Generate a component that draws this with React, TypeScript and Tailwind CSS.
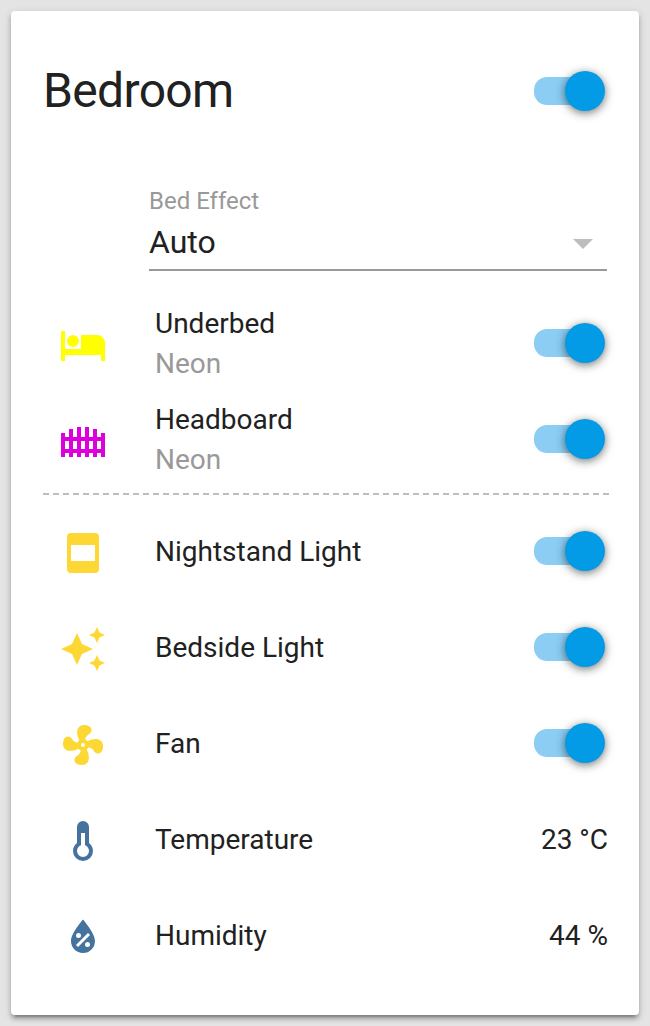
import React from "react";

const paths = {
  bed: "M19,7H11V14H3V5H1V20H3V17H21V20H23V11A4,4 0 0,0 19,7M7,13A3,3 0 0,0 10,10A3,3 0 0,0 7,7A3,3 0 0,0 4,10A3,3 0 0,0 7,13Z",
  fence:
    "M1,8H3V10H5V6H7V10H9V5H11V10H13V5H15V10H17V6H19V10H21V8H23V20H21V18H19V20H17V18H15V20H13V18H11V20H9V18H7V20H5V18H3V20H1ZM3,12V16H5V12ZM7,12V16H9V12ZM11,12V16H13V12ZM15,12V16H17V12ZM19,12V16H21V12Z",
  lamp: "M6,2H18A2,2 0 0,1 20,4V20A2,2 0 0,1 18,22H6A2,2 0 0,1 4,20V4A2,2 0 0,1 6,2M6,8V16H18V8Z",
  sparkle:
    "M19,1L17.74,3.75L15,5L17.74,6.26L19,9L20.25,6.26L23,5L20.25,3.75M9,4L6.5,9.5L1,12L6.5,14.5L9,20L11.5,14.5L17,12L11.5,9.5M19,15L17.74,17.74L15,19L17.74,20.25L19,23L20.25,20.25L23,19L20.25,17.74",
  fan: "M12,11A1,1 0 0,0 11,12A1,1 0 0,0 12,13A1,1 0 0,0 13,12A1,1 0 0,0 12,11M12.5,2C17,2 17.11,5.57 14.75,6.75C13.76,7.24 13.32,8.29 13.13,9.22C13.61,9.42 14.03,9.73 14.35,10.13C18.05,8.13 22.03,8.92 22.03,12.5C22.03,17 18.46,17.1 17.28,14.73C16.78,13.74 15.72,13.3 14.79,13.11C14.59,13.59 14.28,14 13.88,14.34C15.87,18.03 15.08,22 11.5,22C7,22 6.91,18.42 9.27,17.24C10.25,16.75 10.69,15.71 10.89,14.79C10.4,14.59 9.97,14.27 9.65,13.87C5.96,15.85 2,15.07 2,11.5C2,7 5.56,6.89 6.74,9.26C7.24,10.25 8.29,10.68 9.22,10.87C9.41,10.39 9.73,9.97 10.14,9.65C8.15,5.96 8.94,2 12.5,2Z",
  thermometer:
    "M17,17A5,5 0 0,1 12,22A5,5 0 0,1 7,17C7,15.36 7.79,13.91 9,13V5A3,3 0 0,1 12,2A3,3 0 0,1 15,5V13C16.21,13.91 17,15.36 17,17M11,8V14.17C9.83,14.58 9,15.69 9,17A3,3 0 0,0 12,20A3,3 0 0,0 15,17C15,15.69 14.17,14.58 13,14.17V8H11Z",
  humidity:
    "M12,3.25C12,3.25 6,10 6,14C6,17.32 8.69,20 12,20A6,6 0 0,0 18,14C18,10 12,3.25 12,3.25M14.47,9.97L15.53,11.03L9.53,17.03L8.47,15.97M9.75,10A1.25,1.25 0 0,1 11,11.25A1.25,1.25 0 0,1 9.75,12.5A1.25,1.25 0 0,1 8.5,11.25A1.25,1.25 0 0,1 9.75,10M14.25,14.5A1.25,1.25 0 0,1 15.5,15.75A1.25,1.25 0 0,1 14.25,17A1.25,1.25 0 0,1 13,15.75A1.25,1.25 0 0,1 14.25,14.5Z",
};

function Toggle() {
  return (
    <button
      role="switch"
      aria-checked="true"
      className="mr-0.5 flex h-10 w-[71px] shrink-0 items-center"
    >
      <span className="h-7 w-[51px] shrink-0 rounded-l-[13px] bg-[#8ccdf3]" />
      <span className="-ml-5 size-10 shrink-0 rounded-full bg-[#039be5] shadow-[0_2px_10px_rgba(0,0,0,0.55)]" />
    </button>
  );
}

type RowProps = {
  icon: keyof typeof paths;
  color: string;
  name: string;
  secondary?: string;
  value?: string;
};

function Row({ icon, color, name, secondary, value }: RowProps) {
  return (
    <div className="flex h-20 items-center text-[28px] leading-10">
      <svg
        viewBox="0 0 24 24"
        fillRule="evenodd"
        className={`mt-1 ml-4 size-12 shrink-0 fill-current ${color}`}
      >
        <path d={paths[icon]} />
      </svg>
      <div className="mt-0.5 ml-12 grow">
        <div>{name}</div>
        {secondary && <div className="text-[#999999]">{secondary}</div>}
      </div>
      {value ? <div className="mt-0.5 -mr-px">{value}</div> : <Toggle />}
    </div>
  );
}

export default function App() {
  return (
    <div className="h-[1026px] w-[650px] overflow-hidden bg-[#e4e4e4] p-[11px] font-['Roboto',sans-serif] text-[#212121]">
      <div className="flex h-[1004px] w-[628px] flex-col rounded bg-white px-8 pt-8 shadow-[0_4px_4px_rgba(0,0,0,0.24),0_2px_10px_rgba(0,0,0,0.12),0_6px_2px_-4px_rgba(0,0,0,0.2)]">
        <div className="flex h-24 items-center justify-between">
          <h1 className="text-[48px] leading-[80px] tracking-[-0.0135em]">Bedroom</h1>
          <Toggle />
        </div>

        <div className="mt-[46px] ml-[106px] flex h-[86px] flex-col border-b-2 border-[#999999]">
          <div className="text-2xl leading-8 text-[#999999]">Bed Effect</div>
          <div className="flex h-[50px] items-center justify-between pr-[14px] text-[32px] leading-[48px]">
            <span>Auto</span>
            <svg viewBox="0 0 20 10" className="mt-1 h-2.5 w-5 fill-[#bdbdbd]">
              <path d="M0 0h20L10 10z" />
            </svg>
          </div>
        </div>

        <div className="mt-8 flex flex-col gap-4">
          <Row icon="bed" color="text-[#ffff00]" name="Underbed" secondary="Neon" />
          <Row icon="fence" color="text-[#dc00dc]" name="Headboard" secondary="Neon" />
        </div>

        <svg viewBox="0 0 566 2" className="mt-3.5 mb-4 h-0.5 w-[566px] shrink-0">
          <path d="M0 1H566" stroke="#bdbdbd" strokeWidth="2" strokeDasharray="6 4" />
        </svg>

        <div className="flex flex-col gap-4">
          <Row icon="lamp" color="text-[#fdd835]" name="Nightstand Light" />
          <Row icon="sparkle" color="text-[#fdd835]" name="Bedside Light" />
          <Row icon="fan" color="text-[#fdd835]" name="Fan" />
          <Row icon="thermometer" color="text-[#44739e]" name="Temperature" value="23 °C" />
          <Row icon="humidity" color="text-[#44739e]" name="Humidity" value="44 %" />
        </div>
      </div>
    </div>
  );
}
